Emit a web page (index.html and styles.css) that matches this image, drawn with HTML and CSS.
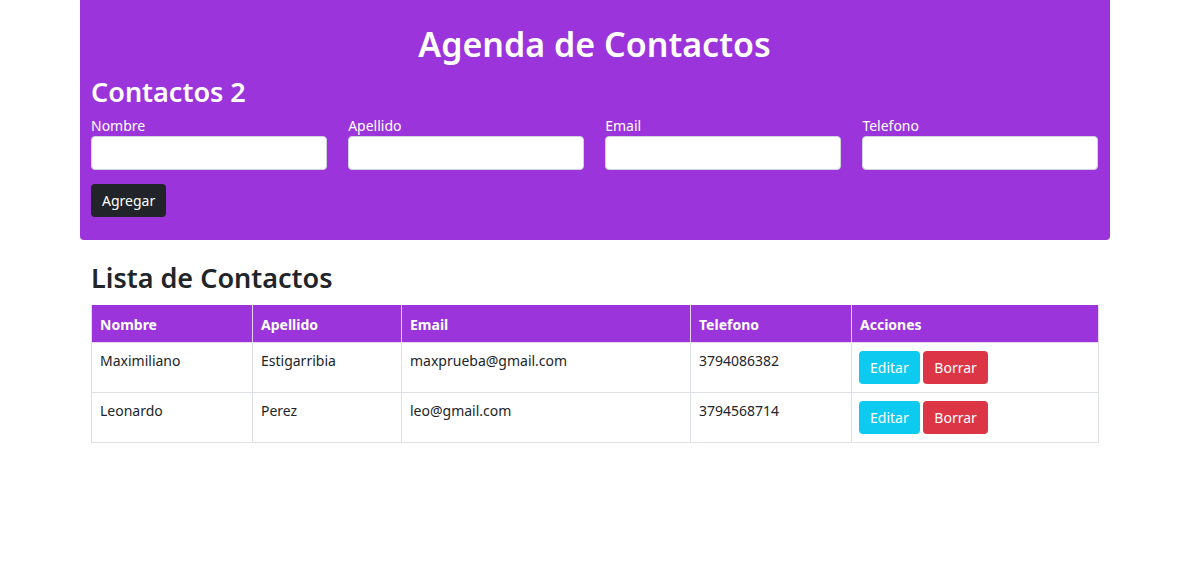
FILE: index.html
```html
<!DOCTYPE html>
<html lang="es">
<head>
    <meta charset="UTF-8">
    <meta name="viewport" content="width=device-width, initial-scale=1.0">
    <title>Agenda de Contactos</title>
    <link rel="stylesheet" href="styles.css">
</head>
<body>
    <div class="container">
        <div class="panel">
            <h1>Agenda de Contactos</h1>
            <h2>Contactos 2</h2>
            <div class="form-row">
                <div class="field">
                    <label for="nombre">Nombre</label>
                    <input type="text" id="nombre">
                </div>
                <div class="field">
                    <label for="apellido">Apellido</label>
                    <input type="text" id="apellido">
                </div>
                <div class="field">
                    <label for="email">Email</label>
                    <input type="text" id="email">
                </div>
                <div class="field">
                    <label for="telefono">Telefono</label>
                    <input type="text" id="telefono">
                </div>
            </div>
            <button class="btn btn-dark">Agregar</button>
        </div>

        <div class="lista">
            <h2 class="titulo-lista">Lista de Contactos</h2>
            <table class="tabla">
                <colgroup>
                    <col class="col-nombre">
                    <col class="col-apellido">
                    <col class="col-email">
                    <col class="col-telefono">
                    <col>
                </colgroup>
                <thead>
                    <tr>
                        <th>Nombre</th>
                        <th>Apellido</th>
                        <th>Email</th>
                        <th>Telefono</th>
                        <th>Acciones</th>
                    </tr>
                </thead>
                <tbody>
                    <tr>
                        <td>Maximiliano</td>
                        <td>Estigarribia</td>
                        <td>maxprueba@gmail.com</td>
                        <td>3794086382</td>
                        <td class="acciones">
                            <button class="btn btn-info">Editar</button>
                            <button class="btn btn-danger">Borrar</button>
                        </td>
                    </tr>
                    <tr>
                        <td>Leonardo</td>
                        <td>Perez</td>
                        <td>leo@gmail.com</td>
                        <td>3794568714</td>
                        <td class="acciones">
                            <button class="btn btn-info">Editar</button>
                            <button class="btn btn-danger">Borrar</button>
                        </td>
                    </tr>
                </tbody>
            </table>
        </div>
    </div>
</body>
</html>
```

FILE: styles.css
```css
body {
    margin: 0;
    font-family: "Noto Sans", "Open Sans", sans-serif;
    font-size: 14px;
    color: #212529;
    background: #fff;
}
.container {
    max-width: 1030px;
    margin: 0 auto;
}
.panel {
    background: #9b35db;
    color: #fff;
    padding: 24px 12px 23px 11px;
    border-radius: 0 0 4px 4px;
}
h1 {
    margin: 0 0 11px;
    text-align: center;
    font-size: 34px;
    font-weight: 600;
    line-height: 1.2;
}
h2 {
    margin: 0 0 10px;
    font-size: 27px;
    font-weight: 600;
    line-height: 1.2;
}
.form-row {
    display: grid;
    grid-template-columns: repeat(4, 1fr);
    gap: 21.5px;
    margin-bottom: 14px;
}
.field label {
    display: block;
    line-height: 1.2;
    margin-bottom: 1px;
}
.field input {
    display: block;
    box-sizing: border-box;
    width: 100%;
    height: 34px;
    border: 1px solid #ced4da;
    border-radius: 4px;
    background: #fff;
}
.btn {
    font-family: inherit;
    font-size: 14px;
    line-height: 1.5;
    border: none;
    border-radius: 4px;
    padding: 6px 11px;
    color: #fff;
    cursor: pointer;
}
.btn-dark {
    background: #212529;
}
.btn-info {
    background: #0dcaf0;
}
.btn-danger {
    background: #dc3545;
}
.lista {
    padding: 22px 11px 0;
}
.titulo-lista {
    margin-bottom: 11px;
}
.tabla {
    width: 100%;
    border-collapse: collapse;
    table-layout: fixed;
}
.tabla th {
    background: #9b35db;
    color: #fff;
    font-weight: 700;
    text-align: left;
    padding: 10px 8px 8px;
    border: 1px solid #e9d6f7;
    border-top: none;
}
.tabla td {
    padding: 8px 8px 20px;
    border: 1px solid #dee2e6;
    vertical-align: top;
}
.tabla td.acciones {
    padding: 8px 7px 8px;
}
.col-nombre { width: 161px; }
.col-apellido { width: 149px; }
.col-email { width: 289px; }
.col-telefono { width: 161px; }
```
